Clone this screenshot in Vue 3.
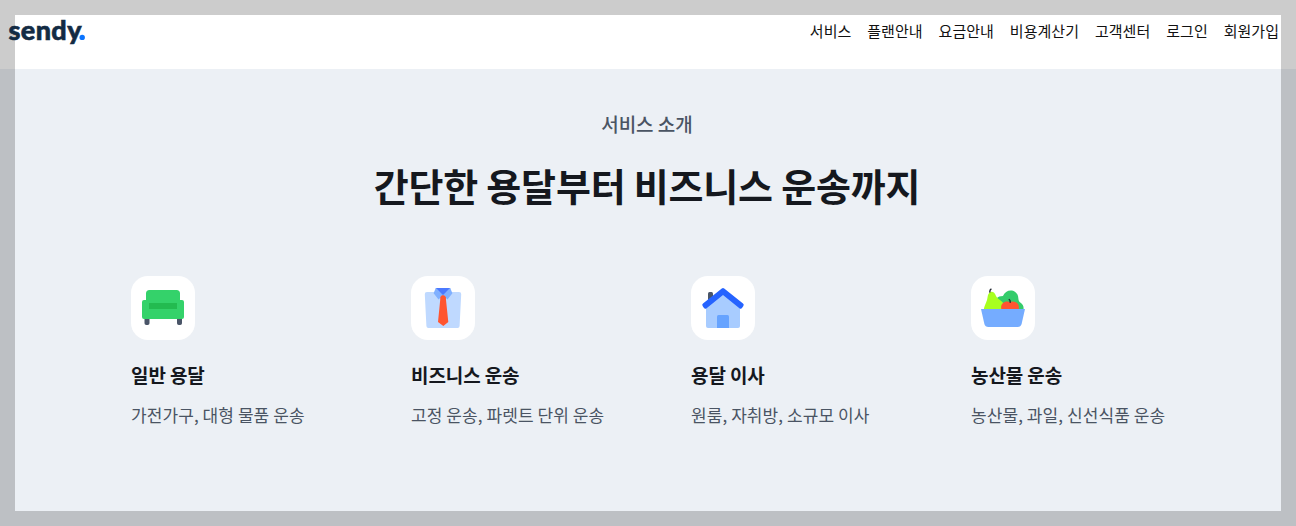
<template>
  <div class="page">
    <header class="header">
      <a class="logo" href="#" aria-label="sendy">
        <svg width="84" height="36" viewBox="0 0 84 36">
          <text x="0.5" y="26.5" textLength="73" lengthAdjust="spacing">sendy</text>
          <circle cx="74.2" cy="24.4" r="2.7" />
        </svg>
      </a>
      <nav class="nav">
        <a v-for="menu in menus" :key="menu" href="#">{{ menu }}</a>
      </nav>
    </header>

    <section class="service">
      <p class="sub-title">서비스 소개</p>
      <h2 class="title">간단한 용달부터 비즈니스 운송까지</h2>

      <ul class="service-list">
        <li v-for="item in services" :key="item.icon" class="service-item">
          <div class="icon-box">
            <svg v-if="item.icon === 'sofa'" viewBox="0 0 64 64">
              <path fill="#4a5568" d="M13.500 42h5v5.200q0 1.800-1.800 1.800h-1.400q-1.800 0-1.800-1.800zM46 42h5v5.200q0 1.800-1.800 1.800h-1.400q-1.800 0-1.800-1.800z" />
              <path fill="#34d26a" d="M18.500 14h27q3.500 0 3.500 3.500V24h2q2 0 2 2v15q0 2-2 2H13q-2 0-2-2V26q0-2 2-2h2v-6.500q0-3.500 3.500-3.500z" />
              <path fill="#23bb50" d="M18 27h28v6H18z" />
            </svg>

            <svg v-else-if="item.icon === 'shirt'" viewBox="0 0 64 64">
              <path fill="#bfd9ff" d="M16 16h32q2.300 0 2.200 2.300L48.600 50q-.1 2-2 2H17.400q-1.900 0-2-2L13.800 18.300Q13.700 16 16 16z" />
              <path fill="#4b79ff" d="M24.500 12h15L32 19.500z" />
              <path fill="#80b0ff" d="M24.800 12l7.200 7.200-4.500 4.200-4.900-6.200zM39.200 12L32 19.200l4.500 4.200 4.900-6.200z" />
              <path fill="#ff5530" d="M29.300 21l1.700-1.800h2l1.900 1.800.1 3L37.300 46 32.300 50 27 46 29.200 24z" />
            </svg>

            <svg v-else-if="item.icon === 'house'" viewBox="0 0 64 64">
              <path fill="#4a5568" d="M17 17.500q0-1.500 1.500-1.500h2q1.500 0 1.500 1.500V28h-5z" />
              <path fill="#a8ccff" d="M15 30L32 16l17 14v20q0 2-2 2H17q-2 0-2-2z" />
              <path fill="#2563ff" d="M30.800 12.600q1.200-1.200 2.400 0L52 27.600q1.500 1.200.2 2.600l-1.200 1.800q-1 1.500-2.600.2L32 19 15.600 32.200q-1.600 1.300-2.600-.2l-1.200-1.800q-1.300-1.400.2-2.600z" />
              <path fill="#66a3ff" d="M26 40.500q0-1.500 1.500-1.500h9q1.500 0 1.500 1.500V52H26z" />
            </svg>

            <svg v-else viewBox="0 0 64 64">
              <path fill="#34cc6b" d="M26 22q1.500-2 6-2c2.500-7.500 13-7.500 15 0 .7 3.500.3 5 2.300 6.500 3 2.500 3.800 4 3 8H30z" />
              <path fill="#a8ff1f" d="M12.800 34c.4-5 3.200-7.500 3.700-12.500.6-7.500 6.800-7.500 8.500-1.500 1.300 4 9.500 4.500 9.500 14z" />
              <path fill="#ff5530" d="M30.500 34c-1.500-5 1.500-8.700 6-8.500q2.500.8 5 0c5 0 7.500 4 6 8.500z" />
              <path class="stem" d="M18.800 16q0-2 1.200-2.800M39.200 26.200q.2-2-1-2.700" />
              <path fill="#75acff" d="M10 33h44l-3.400 15q-.8 3-4 3H17.400q-3.200 0-4-3z" />
            </svg>
          </div>
          <h3>{{ item.name }}</h3>
          <p>{{ item.desc }}</p>
        </li>
      </ul>
    </section>
  </div>
</template>

<script setup>
const menus = ['서비스', '플랜안내', '요금안내', '비용계산기', '고객센터', '로그인', '회원가입']

const services = [
  { icon: 'sofa', name: '일반 용달', desc: '가전가구, 대형 물품 운송' },
  { icon: 'shirt', name: '비즈니스 운송', desc: '고정 운송, 파렛트 단위 운송' },
  { icon: 'house', name: '용달 이사', desc: '원룸, 자취방, 소규모 이사' },
  { icon: 'basket', name: '농산물 운송', desc: '농산물, 과일, 신선식품 운송' },
]
</script>

<style>
body {
  margin: 0;
  background: #fff;
}
</style>

<style scoped>
.page {
  height: 526px;
  overflow: hidden;
  font-family: 'Noto Sans CJK KR', 'Noto Sans', sans-serif;
  color: #15181e;
}

.header {
  display: flex;
  justify-content: space-between;
  align-items: flex-start;
  box-sizing: border-box;
  height: 69px;
  padding: 13px 17px 0 8px;
  background:
    linear-gradient(#ccc, #ccc) top / 100% 15px no-repeat,
    linear-gradient(#ccc, #ccc) left / 15px 100% no-repeat,
    linear-gradient(#ccc, #ccc) right / 15px 100% no-repeat,
    #fff;
}

.logo svg {
  display: block;
}

.logo text {
  font-family: Lato, sans-serif;
  font-size: 27px;
  font-weight: 900;
  fill: #132b43;
  stroke: #132b43;
  stroke-width: 0.6;
}

.logo circle {
  fill: #0a74ff;
}

.nav {
  display: flex;
  gap: 16px;
  padding-top: 7px;
}

.nav a {
  font-size: 15px;
  line-height: 22px;
  letter-spacing: 0.02px;
  color: #111;
  text-decoration: none;
}

.service {
  box-sizing: border-box;
  height: 457px;
  padding: 41px 2px 0 0;
  border: 15px solid #bdc0c4;
  border-top: 0;
  background: #ecf0f5;
}

.sub-title {
  margin: 0;
  font-size: 19px;
  font-weight: 500;
  line-height: 28px;
  text-align: center;
  color: #4a5463;
}

.title {
  margin: 19px 0 0;
  font-size: 38px;
  font-weight: 700;
  line-height: 56px;
  letter-spacing: -0.2px;
  text-align: center;
}

.service-list {
  display: grid;
  grid-template-columns: repeat(4, 280px);
  margin: 63px 0 0 116px;
  padding: 0;
  list-style: none;
}

.icon-box {
  width: 64px;
  height: 64px;
  border-radius: 17px;
  background: #fff;
}

.icon-box svg {
  display: block;
}

.stem {
  fill: none;
  stroke: #222831;
  stroke-width: 1.4;
  stroke-linecap: round;
}

.service-item h3 {
  margin: 21px 0 0;
  font-size: 19px;
  font-weight: 700;
  line-height: 28px;
  letter-spacing: -0.1px;
}

.service-item p {
  margin: 13px 0 0;
  font-size: 17px;
  line-height: 26px;
  letter-spacing: 0.08px;
  color: #4a5463;
  white-space: nowrap;
}
</style>
